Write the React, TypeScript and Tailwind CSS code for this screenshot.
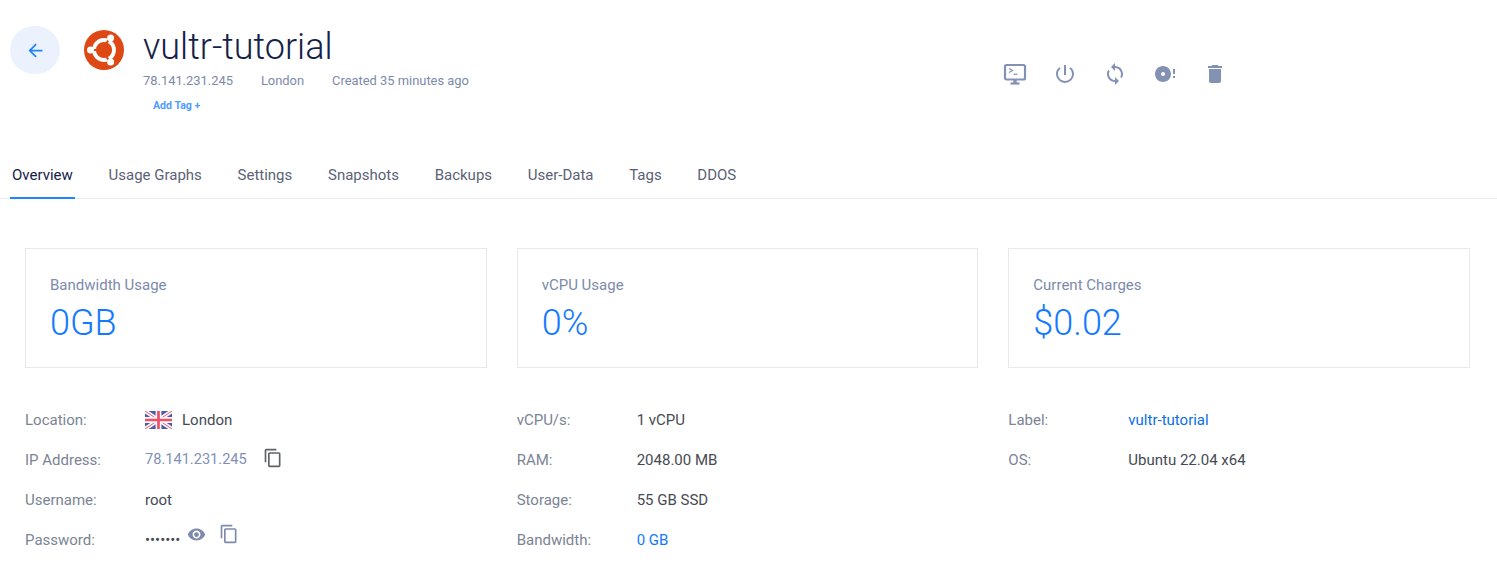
import React from "react"
import { MdArrowBack, MdContentCopy, MdDelete, MdDiscFull, MdPowerSettingsNew, MdSync, MdVisibility } from "react-icons/md"

const tabs = ["Overview", "Usage Graphs", "Settings", "Snapshots", "Backups", "User-Data", "Tags", "DDOS"]

const cards = [
  { label: "Bandwidth Usage", value: "0GB" },
  { label: "vCPU Usage", value: "0%" },
  { label: "Current Charges", value: "$0.02" },
]

function UbuntuLogo() {
  return (
    <svg viewBox="0 0 40 40" className="h-10 w-10 shrink-0">
      <circle cx="20" cy="20" r="20" fill="#dd4814" />
      <circle cx="20" cy="20" r="10" fill="none" stroke="#fff" strokeWidth="3.8" />
      <path d="M22 14 L29 3 M22 26 L29 37 M13 20 L2 20" stroke="#dd4814" strokeWidth="2.2" />
      <circle cx="6.5" cy="20" r="3.5" fill="#fff" />
      <circle cx="26.6" cy="8" r="3.5" fill="#fff" />
      <circle cx="26.6" cy="32" r="3.5" fill="#fff" />
    </svg>
  )
}

function ConsoleIcon() {
  return (
    <svg viewBox="0 0 24 24" className="h-6 w-6 text-[#8391b3]" fill="none" stroke="currentColor">
      <rect x="2" y="3" width="20" height="14.5" rx="1.5" strokeWidth="2.2" />
      <path d="M6 6.5 L9.5 8.5 L6 10.5" strokeWidth="1.2" />
      <path d="M10.5 12.2 H14.5" strokeWidth="1.2" />
      <path d="M12 17.5 V21" strokeWidth="3.4" />
      <path d="M7.5 21.5 H16.5" strokeWidth="2.2" />
    </svg>
  )
}

function UkFlag() {
  return (
    <svg viewBox="0 0 60 40" className="h-[18px] w-[27px]">
      <rect width="60" height="40" fill="#4a5aa8" />
      <path d="M0 0 L60 40 M60 0 L0 40" stroke="#f7f7f9" strokeWidth="9" />
      <path d="M0 0 L60 40 M60 0 L0 40" stroke="#ee5a76" strokeWidth="2.2" />
      <path d="M30 0 V40 M0 20 H60" stroke="#f7f7f9" strokeWidth="13" />
      <path d="M30 0 V40 M0 20 H60" stroke="#ee4f6b" strokeWidth="6" />
    </svg>
  )
}

function Row({ label, children }: { label: string; children: React.ReactNode }) {
  return (
    <div className="flex h-10 items-center">
      <div className="w-[120px] shrink-0 text-[#7b8494]">{label}</div>
      <div className="flex items-center text-[#464a53]">{children}</div>
    </div>
  )
}

export default function App() {
  return (
    <div className="h-[584px] overflow-hidden bg-white font-['Roboto',sans-serif] text-[15px]">
      {/* Header */}
      <div className="flex h-[149px] items-start pl-2.5 pt-[26px]">
        <button className="flex h-12 w-[50px] shrink-0 items-center justify-center rounded-full bg-[#ebf2fe] text-[#1e84ff]">
          <MdArrowBack size={21} />
        </button>
        <div className="ml-6 mt-1">
          <UbuntuLogo />
        </div>
        <div className="-mt-[3px] ml-[19px] w-[860px]">
          <h1 className="text-[36px] leading-[48px] font-light text-[#142149]">vultr-tutorial</h1>
          <div className="flex gap-7 text-[12.9px] leading-[20px] text-[#7d8aab]">
            <span>78.141.231.245</span>
            <span>London</span>
            <span>Created 35 minutes ago</span>
          </div>
          <div className="mt-2 ml-2.5 text-[10.6px] leading-[14px] font-bold text-[#4f9bff]">Add Tag +</div>
        </div>
        <div className="mt-9 flex items-center gap-[26px] text-[#8391b3]">
          <ConsoleIcon />
          <MdPowerSettingsNew size={24} />
          <MdSync size={24} />
          <MdDiscFull size={24} />
          <MdDelete size={24} />
        </div>
      </div>

      {/* Tabs */}
      <div className="flex h-[50px] gap-[31.7px] border-b border-[#e6e9f0] pl-2.5">
        {tabs.map((t, i) => (
          <div
            key={t}
            className={
              i === 0
                ? "-mb-px border-b-2 border-[#1e84ff] px-0.5 pt-[15px] text-[#142149]"
                : "px-0.5 pt-[15px] text-[#5b6178]"
            }
          >
            {t}
          </div>
        ))}
      </div>

      {/* Stat cards */}
      <div className="mt-[49px] grid grid-cols-3 gap-[30px] pr-[27px] pl-[25px]">
        {cards.map((c) => (
          <div key={c.label} className="h-[120px] border border-[#e6e9ee] pt-[26px] pl-6">
            <div className="leading-[20px] text-[#7d8aab]">{c.label}</div>
            <div className="mt-[6px] text-[36px] leading-[44px] font-light text-[#1479ff]">{c.value}</div>
          </div>
        ))}
      </div>

      {/* Details */}
      <div className="mt-[32px] grid grid-cols-3 gap-[30px] pr-[27px] pl-[25px]">
        <div>
          <Row label="Location:">
            <UkFlag />
            <span className="ml-2.5">London</span>
          </Row>
          <Row label="IP Address:">
            <span className="text-[14.6px] text-[#8090b8]">78.141.231.245</span>
            <MdContentCopy size={20} className="mb-1 ml-4 text-[#5f6368]" />
          </Row>
          <Row label="Username:">root</Row>
          <Row label="Password:">
            <span>•••••••</span>
            <MdVisibility size={19} className="mb-3 ml-[7px] text-[#7d8aab]" />
            <MdContentCopy size={20} className="mb-3 ml-[13px] text-[#7d8aab]" />
          </Row>
        </div>
        <div>
          <Row label="vCPU/s:">1 vCPU</Row>
          <Row label="RAM:">2048.00 MB</Row>
          <Row label="Storage:">55 GB SSD</Row>
          <Row label="Bandwidth:">
            <span className="text-[#1479ff]">0 GB</span>
          </Row>
        </div>
        <div>
          <Row label="Label:">
            <span className="text-[#0a6fe8]">vultr-tutorial</span>
          </Row>
          <Row label="OS:">Ubuntu 22.04 x64</Row>
        </div>
      </div>
    </div>
  )
}
